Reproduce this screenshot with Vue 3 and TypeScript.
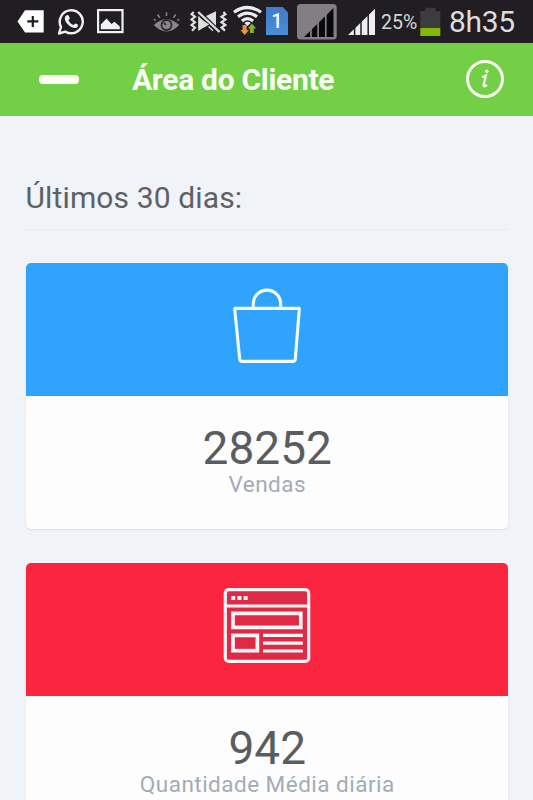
<script setup lang="ts">
interface Stat {
  kind: 'bag' | 'page'
  value: string
  label: string
}

const stats: Stat[] = [
  { kind: 'bag', value: '28252', label: 'Vendas' },
  { kind: 'page', value: '942', label: 'Quantidade Média diária' },
]
</script>

<template>
  <div class="screen">
    <div class="status">
      <svg class="i-plus" viewBox="17 10 28 24" width="28" height="24">
        <path d="M25 10.3H43.7V32.5H25L17.5 21.4Z" fill="#fff" />
        <path d="M32.8 16V27M27.3 21.4H38.4" stroke="#201e22" stroke-width="2.2" />
      </svg>
      <svg class="i-chat" viewBox="57 8 28 28" width="28" height="28">
        <path d="M59 33.5L61 27A11.5 11.5 0 1 1 65.3 31.6Z" fill="none" stroke="#f1f1f1" stroke-width="2.4" stroke-linejoin="round" />
        <path d="M66.2 15.6C67.3 14.5 68.4 14.8 68.9 16L69.7 18C70 18.9 68.7 19.8 68.5 20.3C69.4 22.5 71.2 24.2 73.5 25C74.2 24.7 74.9 23.2 75.7 23.5L78 24.7C78.7 25.3 77.6 27.3 76.4 27.8C71.8 29.3 64.3 22.4 64.8 18C64.9 17 65.4 16.2 66.2 15.6Z" fill="#f1f1f1" />
      </svg>
      <svg class="i-image" viewBox="96 8 29 26" width="29" height="26">
        <rect x="98.1" y="10.1" width="24.4" height="22" fill="none" stroke="#f1f1f1" stroke-width="2.2" />
        <path d="M100.8 29.3V24.5L106.5 18.5L111.5 24L114.5 21.7L119.8 26.5V29.3Z" fill="#f1f1f1" />
      </svg>
      <svg class="i-eye" viewBox="153 10 28 24" width="28" height="24">
        <path d="M153.8 25Q166.5 13.5 179.2 25Q166.5 38 153.8 25Z" fill="#898689" />
        <circle cx="166.5" cy="25" r="5.9" fill="#2a282b" />
        <circle cx="166.5" cy="25" r="4.1" fill="#898689" />
        <path d="M166 25L163.6 22.7" stroke="#2a282b" stroke-width="1.6" />
        <path d="M166.5 16V12.2M159.8 17.7L157.5 14.5M173.4 17.7L175.7 14.5M155.5 20.7L154 19M177.6 20.7L179 19" stroke="#898689" stroke-width="1.5" />
      </svg>
      <svg class="i-mute" viewBox="190 9 37 25" width="37" height="25">
        <path d="M198.4 15.5V31L206.5 25.5Z" fill="#dedede" />
        <path d="M198.4 17V29.5L205 27L209 24.5Z" fill="#dedede" />
        <path d="M206 16L216 11.3V25.8Z" fill="#dedede" />
        <path d="M208.5 26.5L213 30.8" stroke="#dedede" stroke-width="1.4" />
        <path d="M198.2 12L219.5 32" stroke="#dedede" stroke-width="2.4" />
        <path d="M193.7 12L191.6 14.2L195 16.8L191.6 19.5L195 22.2L191.6 25L195 27.7L192 30.7M223.4 12L225.4 14.2L221.5 16.8L225.4 19.5L221.5 22.2L225.4 25L221.5 27.7L225 30.7" fill="none" stroke="#dedede" stroke-width="2.2" />
      </svg>
      <svg class="i-wifi" viewBox="232 4 31 32" width="31" height="32">
        <g fill="none" stroke="#ececec" stroke-width="3.2">
          <path d="M234 12.2Q247.5 2.8 261 12.2" />
          <path d="M238 16.7Q247.5 9.6 257 16.7" />
          <path d="M241.9 20.9Q247.5 16.4 253.1 20.9" />
        </g>
        <path d="M244.3 23Q247.5 20.4 250.7 23L247.5 26Z" fill="#ececec" />
        <path d="M242.6 25H246.7V30H249L244.7 35L240.4 30H242.6Z" fill="#e99542" />
        <path d="M251.9 23.5L256.1 28.4H253.8V33H250V28.4H247.7Z" fill="#7eb52d" />
      </svg>
      <div class="sim">1</div>
      <svg class="i-sig-box" viewBox="297 4 40 36" width="40" height="36">
        <rect x="297" y="4" width="39.7" height="35.5" rx="3.5" fill="#827f82" />
        <path d="M304 37L333.5 8V37Z" fill="#09080a" />
        <path d="M311 37V26M318.1 37V20M325.8 37V12" stroke="#827f82" stroke-width="1.7" />
      </svg>
      <svg class="i-sig" viewBox="347 8 29 28" width="29" height="28">
        <path d="M348 35L375 8.8V35Z" fill="#eeedef" />
        <path d="M354.6 35V24M361 35V17M368.2 35V10" stroke="#201e22" stroke-width="1.5" />
      </svg>
      <span class="percent">25%</span>
      <svg class="i-batt" viewBox="420 7 21 30" width="21" height="30">
        <path d="M420.3 11H425.3V7.8H435.3V11H440.3V28H420.3Z" fill="#3c3b3e" />
        <path d="M420.3 28H440.3V36H420.3Z" fill="#80b900" />
      </svg>
      <span class="clock">8h35</span>
    </div>

    <header class="bar">
      <span class="menu"></span>
      <h1>Área do Cliente</h1>
      <svg class="info" viewBox="0 0 40 40" width="40" height="40">
        <circle cx="20" cy="20" r="17.5" fill="none" stroke="#fafff4" stroke-width="3" />
        <circle cx="21.8" cy="12.3" r="1.7" fill="#fafff4" />
        <path d="M17 17.8Q19 17.6 20.8 16.6L18.7 25.6Q18.3 27.8 19.8 27.2Q20.8 26.8 21.8 25.6" fill="none" stroke="#fafff4" stroke-width="2.2" />
      </svg>
    </header>

    <main>
      <h2>Últimos 30 dias:</h2>
      <section v-for="s in stats" :key="s.kind" class="card">
        <div class="top" :class="s.kind">
          <svg v-if="s.kind === 'bag'" viewBox="232 286 70 80" width="70" height="80" fill="none" stroke="#f4fdff" stroke-width="3.1" stroke-linejoin="round">
            <path d="M235.3 308.4H298.9Q299.4 308.4 299.3 309.2L295.3 359Q295 361.4 292.8 361.4H242.2Q240 361.4 239.7 359L234.7 309.2Q234.6 308.4 235.3 308.4Z" />
            <path d="M253.3 308V303.8A13.7 13.7 0 0 1 280.7 303.8V308" />
          </svg>
          <svg v-else viewBox="223 586 88 78" width="88" height="78" fill="none" stroke="#fff3f5" stroke-width="3.2">
            <rect x="225.3" y="589.7" width="83.4" height="71.7" rx="3.5" fill="#df2a45" />
            <path d="M225 606H309M263 635.4H302.8M263 643.2H302.8M263 651H302.8" />
            <path d="M231.2 598H247.8" stroke-width="3.8" stroke-dasharray="4 2.2" />
            <rect x="233" y="613.4" width="67.8" height="14" stroke-width="3.7" />
            <rect x="233" y="635.4" width="24.4" height="15.3" stroke-width="3.7" />
          </svg>
        </div>
        <div class="body">
          <div class="value">{{ s.value }}</div>
          <div class="label">{{ s.label }}</div>
        </div>
      </section>
    </main>
  </div>
</template>

<style>
body {
  margin: 0;
  overflow: hidden;
}
</style>

<style scoped>
.screen {
  width: 533px;
  height: 800px;
  overflow: hidden;
  background: #f0f3f7;
  font-family: Roboto, "Liberation Sans", sans-serif;
}
svg {
  display: block;
  flex: none;
}
.status {
  height: 43px;
  box-sizing: border-box;
  display: flex;
  align-items: flex-start;
  background: #201e22;
  white-space: nowrap;
}
.i-plus { margin: 10px 0 0 17px; }
.i-chat { margin: 8px 0 0 12px; }
.i-image { margin: 8px 0 0 11px; }
.i-eye { margin: 10px 0 0 28px; }
.i-mute { margin: 9px 0 0 9px; }
.i-wifi { margin: 4px 0 0 5px; }
.sim {
  flex: none;
  width: 22px;
  height: 28px;
  margin: 7px 0 0 3px;
  background: linear-gradient(#3d7cc9, #4a8ddb);
  clip-path: polygon(0 0, 76% 0, 100% 20%, 100% 100%, 0 100%);
  color: #f4f8fc;
  font-size: 20px;
  font-weight: 500;
  line-height: 29px;
  text-align: center;
}
.i-sig-box { margin: 4px 0 0 9px; }
.i-sig { margin: 8px 0 0 10px; }
.percent {
  flex: none;
  width: 39px;
  margin: 7px 0 0 5px;
  color: #d5d4d6;
  font-size: 19.5px;
  line-height: 32px;
}
.i-batt { margin: 7px 0 0 0; }
.clock {
  margin: 3px 0 0 8px;
  color: #dddcdd;
  font-size: 30px;
  line-height: 37px;
  letter-spacing: -0.3px;
}
.bar {
  height: 73px;
  display: flex;
  align-items: center;
  background: #73cf46;
}
.menu {
  width: 40px;
  height: 9px;
  margin-left: 39px;
  border-radius: 4px;
  background: #fbfff4;
}
h1 {
  width: 333px;
  margin: 1px 0 0 53px;
  color: #fafff5;
  font-size: 30px;
  font-weight: 700;
  line-height: 36px;
  letter-spacing: -0.3px;
  white-space: nowrap;
}
.info {
  margin-top: -1px;
}
main {
  padding: 57px 25px 0 25.5px;
}
h2 {
  margin: 0 0 33px;
  height: 56px;
  border-bottom: 1px solid #e8eaed;
  color: #5d6165;
  font-size: 30px;
  font-weight: 400;
  line-height: 49px;
  letter-spacing: 0.13px;
  white-space: nowrap;
}
.card {
  height: 266px;
  margin-bottom: 34px;
  border-radius: 5px;
  overflow: hidden;
  background: #fdfdfe;
  box-shadow: 0 1px 2px rgba(80, 90, 110, 0.13);
}
.top {
  height: 133px;
  box-sizing: border-box;
  display: flex;
  justify-content: center;
  padding-top: 23px;
}
.bag { background: #30a3ff; }
.page { background: #fc253f; }
.body {
  padding: 32px 0 0 1px;
  text-align: center;
}
.value {
  color: #5a5d5f;
  font-size: 46px;
  line-height: 40px;
}
.label {
  color: #a2acb8;
  font-size: 22.5px;
  line-height: 32px;
  letter-spacing: 0.48px;
}
</style>
